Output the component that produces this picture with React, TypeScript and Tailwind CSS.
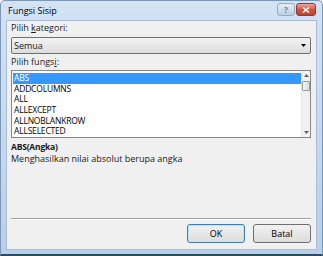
import { memo } from 'react';

const items = ['ABS', 'ADDCOLUMNS', 'ALL', 'ALLEXCEPT', 'ALLNOBLANKROW', 'ALLSELECTED'];

const TitleButtons = memo(() => (
  <div className="flex items-start gap-[1px] mt-[-2px]">
    <div className="w-[18px] h-[13px] rounded-[3px] border border-[#98abc4] bg-gradient-to-b from-[#e4edf7] to-[#bdd0e6] flex items-center justify-center">
      <span className="text-[8px] leading-none font-bold text-[#6a7f9c]">?</span>
    </div>
    <div className="w-[20px] h-[13px] rounded-[3px] border border-[#8b3a35] bg-gradient-to-b from-[#e9a99f] via-[#d4533f] to-[#c6402f] flex items-center justify-center">
      <svg width="8" height="6" viewBox="0 0 8 6">
        <path d="M1 0.5 L7 5.5 M7 0.5 L1 5.5" stroke="#fff" strokeWidth="1.6" />
      </svg>
    </div>
  </div>
));
TitleButtons.displayName = 'TitleButtons';

export default function App() {
  return (
    <div
      className="w-[323px] h-[256px] overflow-hidden bg-white"
      style={{ fontFamily: '"Open Sans", "Noto Sans", sans-serif' }}
    >
      <div className="h-full flex flex-col bg-gradient-to-b from-[#d3e3f4] via-[#c6d9ef] to-[#b9cfe8] rounded-t-[5px] border border-[#7d97b6] border-b-2 border-b-[#2c4b5e] px-[5px] pb-[4px]">
        {/* title bar */}
        <div className="h-[19px] flex items-center justify-between pl-[2px] pr-[1px]">
          <span className="text-[9px] text-black">Fungsi Sisip</span>
          <TitleButtons />
        </div>

        {/* client */}
        <div className="flex-1 flex flex-col bg-[#f0f0f0] border border-[#a9bdd4] pl-[4px] pr-[5px] text-[9px] text-[#1a1a1a]">
          <div className="h-[10px] mt-[2px] leading-[10px]">
            Pilih <span className="underline">k</span>ategori:
          </div>
          <div className="mt-[4px] h-[17px] rounded-[2px] border border-[#707070] bg-gradient-to-b from-[#f3f3f3] to-[#dddddd] flex items-center justify-between pl-[2px] pr-[4px]">
            <span>Semua</span>
            <svg width="5" height="3" viewBox="0 0 5 3">
              <path d="M0 0 H5 L2.5 3 Z" fill="#000" />
            </svg>
          </div>
          <div className="h-[10px] mt-[3px] leading-[10px]">
            Pilih fungs<span className="underline">i</span>:
          </div>
          <div className="mt-[3px] h-[68px] border border-[#828790] bg-white flex">
            <div className="flex-1 pt-[2px] pl-[1px] text-[8.5px] tracking-[-0.2px]">
              {items.map((it, i) => (
                <div
                  key={it}
                  className={`h-[10.7px] leading-[10.7px] pl-[1px] overflow-hidden ${
                    i === 0 ? 'bg-[#3399ff] text-white' : 'text-black'
                  }`}
                >
                  {it}
                </div>
              ))}
            </div>
            <div className="w-[9px] bg-[#f0f0f0] border-l border-[#e6e6e6] flex flex-col items-center pt-[3px] pb-[3px]">
              <svg width="5" height="3" viewBox="0 0 5 3">
                <path d="M0 3 H5 L2.5 0 Z" fill="#606060" />
              </svg>
              <div className="mt-[4px] w-[8px] h-[10px] rounded-[1px] border border-[#9a9a9a] bg-gradient-to-r from-[#f4f4f4] to-[#dcdcdc]" />
              <div className="flex-1" />
              <svg width="5" height="3" viewBox="0 0 5 3">
                <path d="M0 0 H5 L2.5 3 Z" fill="#606060" />
              </svg>
            </div>
          </div>
          <div className="mt-[3px] font-bold text-[8.5px] leading-[11px] tracking-[-0.2px]">ABS(Angka)</div>
          <div className="mt-[1px] leading-[11px]">Menghasilkan nilai absolut berupa angka</div>
          <div className="flex-1" />
          <div className="h-[2px] border-t border-[#a0a0a0] border-b border-b-white" />
          <div className="flex justify-end gap-[8px] mt-[4px] mb-[6px]">
            <button className="w-[58px] h-[19px] rounded-[3px] border border-[#3c7fb1] bg-gradient-to-b from-[#f2f2f2] to-[#dcdcdc] shadow-[inset_0_0_0_1px_#b8e3f9] text-[9px] text-black">
              OK
            </button>
            <button className="w-[58px] h-[19px] rounded-[3px] border border-[#707070] bg-gradient-to-b from-[#f2f2f2] to-[#dcdcdc] text-[9px] text-black">
              Batal
            </button>
          </div>
        </div>
      </div>
    </div>
  );
}
